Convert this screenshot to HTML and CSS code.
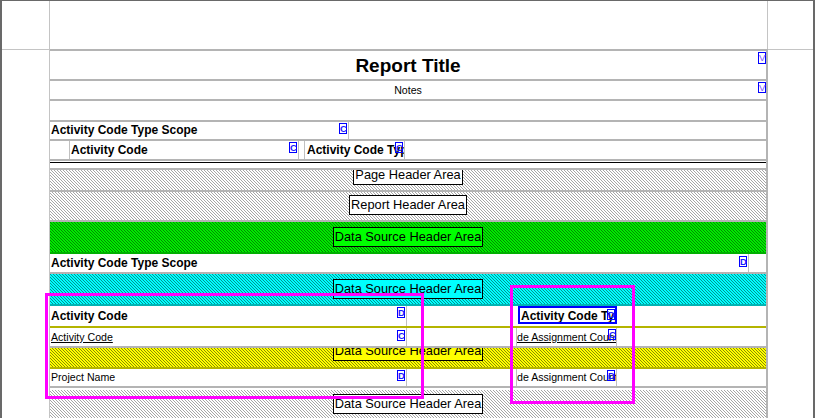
FILE: index.html
```html
<!DOCTYPE html>
<html>
<head>
<meta charset="utf-8">
<link rel="stylesheet" href="styles.css">
</head>
<body>
<div class="stage">
  <div class="frame">
    <div class="gutter"><div class="gutter-top"></div></div>
    <div class="page">
      <div class="page-top"></div>
      <div class="sheet">
        <div class="line"></div>
        <div class="row title-row"><span class="title">Report Title</span><span class="badge b-title">V</span></div>
        <div class="line"></div>
        <div class="row notes-row"><span class="notes">Notes</span><span class="badge b-notes">V</span></div>
        <div class="line"></div>
        <div class="row empty-row"></div>
        <div class="line"></div>
        <div class="row scope-row">
          <div class="cell bold cell-scope">Activity Code Type Scope<span class="badge b-r1">C</span></div>
        </div>
        <div class="line"></div>
        <div class="row ac-row">
          <div class="cell indent"></div>
          <div class="cell bold cell-ac">Activity Code<span class="badge b-r1">C</span></div>
          <div class="cell gap"></div>
          <div class="cell bold cell-act">Activity Code Type<span class="badge b-r1">C</span></div>
        </div>
        <div class="line"></div>
        <div class="sep"></div>
        <div class="line"></div>
        <div class="band hatch-gray h20"><div class="area area-page">Page Header Area</div></div>
        <div class="line"></div>
        <div class="band hatch-gray h28"><div class="area area-report">Report Header Area</div></div>
        <div class="line"></div>
        <div class="band hatch-green h30"><div class="area area-ds green">Data Source Header Area</div></div>
        <div class="line line-green"></div>
        <div class="row r18">
          <div class="cell bold cell-wide">Activity Code Type Scope<span class="badge b-r1 b-t2">D</span></div>
        </div>
        <div class="line"></div>
        <div class="band hatch-cyan h30"><div class="area area-ds cyan">Data Source Header Area</div></div>
        <div class="line line-cyan"></div>
        <div class="row r20">
          <div class="cell bold cell-left">Activity Code<span class="badge b-r1">D</span></div>
          <div class="spacer sp-sel"></div>
          <div class="cell bold cell-sel">Activity Code Type<span class="badge b-r0">D</span></div>
        </div>
        <div class="line line-olive"></div>
        <div class="row r18">
          <div class="cell cell-left"><span class="u">Activity Code</span><span class="badge b-r1 b-t2">C</span></div>
          <div class="spacer sp-r"></div>
          <div class="cell cell-right"><span class="u">de Assignment Count</span><span class="badge b-r0">C</span></div>
        </div>
        <div class="line"></div>
        <div class="band hatch-yellow h19"><div class="area area-yellow yellow">Data Source Header Area</div></div>
        <div class="line line-olive"></div>
        <div class="row r17">
          <div class="cell cell-left">Project Name<span class="badge b-r1">D</span></div>
          <div class="spacer sp-r"></div>
          <div class="cell cell-right">de Assignment Count<span class="badge b-r1">D</span></div>
        </div>
        <div class="line"></div>
        <div class="white2"></div>
        <div class="band hatch-gray fill"><div class="area area-last">Data Source Header Area</div></div>
      </div>
    </div>
    <div class="gutter-r"><div class="gutter-top"></div></div>
  </div>
  <div class="mark mark-a"></div>
  <div class="mark mark-b"></div>
</div>
</body>
</html>
```

FILE: styles.css
```css
* { box-sizing: border-box; }

body {
  margin: 0;
  background: #fff;
  font-family: "Liberation Sans", Arial, sans-serif;
  color: #000;
}

.stage {
  position: relative;
  width: 816px;
  height: 418px;
  overflow: hidden;
  background: #fff;
}

.frame {
  display: flex;
  width: 815px;
  height: 418px;
  border-top: 1px solid #696969;
  border-left: 2px solid #696969;
  border-right: 2px solid #696969;
}

.gutter {
  width: 48px;
  flex: none;
  border-right: 1px solid #c4c4c4;
}

.gutter-top {
  height: 49px;
  border-bottom: 1px solid #c4c4c4;
}

.gutter-r {
  width: 45px;
  flex: none;
}

.page {
  width: 718px;
  flex: none;
  display: flex;
  flex-direction: column;
}

.page-top {
  height: 48px;
  flex: none;
  border-right: 1px solid #c4c4c4;
}

.sheet {
  flex: 1;
  display: flex;
  flex-direction: column;
  border-right: 2px solid #b4b4b4;
}

.line {
  height: 2px;
  flex: none;
  background: #b4b4b4;
}
.line-green { background: #00b000; }
.line-cyan { background: #00b4b4; }
.line-olive { background: #b4b400; }

.sep {
  flex: none;
  margin-top: 1px;
  border-top: 1px solid #000;
  height: 6px;
}

.white2 { height: 2px; flex: none; }

.row {
  position: relative;
  display: flex;
  flex: none;
  background: #fff;
  font-size: 10.6px;
}

.title-row { height: 28px; justify-content: center; }
.title {
  font-weight: bold;
  font-size: 19px;
  line-height: 28px;
  padding-top: 1px;
}
.notes-row { height: 18px; justify-content: center; }
.notes { font-size: 10.6px; line-height: 18px; }
.empty-row { height: 19px; }
.scope-row { height: 17px; line-height: 17px; }
.ac-row { height: 18px; line-height: 18px; }
.r17 { height: 17px; line-height: 17px; }
.r18 { height: 18px; line-height: 18px; }
.r20 { height: 20px; line-height: 20px; }

.cell {
  position: relative;
  height: 100%;
  flex: none;
  overflow: hidden;
  white-space: nowrap;
  padding-left: 1px;
  border-right: 1px solid #c0c0c0;
}
.bold { font-weight: bold; font-size: 12px; }

.cell-scope { width: 299px; }
.indent { width: 20px; }
.cell-ac { width: 229px; }
.gap { width: 6px; }
.cell-act { width: 100px; padding-left: 2px; }
.cell-wide { width: 699px; }
.cell-left { width: 357px; }
.sp-sel { width: 111px; flex: none; }
.sp-r { width: 109px; flex: none; }
.cell-sel {
  width: 99px;
  height: 18px;
  border: 2px solid #0000ff;
  line-height: 16px;
  padding-left: 1px;
}
.cell-right {
  width: 101px;
  border-left: 1px solid #c0c0c0;
  padding-left: 0;
}

.u { text-decoration: underline; }

.badge {
  position: absolute;
  top: 1px;
  width: 8px;
  height: 11px;
  border: 1px solid #0000ff;
  color: #1a1aff;
  font-family: "Liberation Sans", Arial, sans-serif;
  font-weight: bold;
  font-size: 9.5px;
  line-height: 9px;
  text-align: center;
  letter-spacing: -0.5px;
}
.b-title { right: 0; top: 1px; height: 12px; line-height: 10px; color: #7a50ff; font-weight: normal; }
.b-notes { right: 0; top: 1px; color: #7a50ff; font-weight: normal; }
.b-r1 { right: 1px; }
.b-r0 { right: 0; }
.b-t2 { top: 2px; }

.band {
  position: relative;
  flex: none;
  overflow: hidden;
  display: flex;
  justify-content: center;
  align-items: flex-start;
}
.h19 { height: 19px; }
.h20 { height: 20px; }
.h28 { height: 28px; }
.h30 { height: 30px; }
.fill { flex: 1; }

.hatch-gray {
  background: repeating-linear-gradient(45deg, #a6a6a6 0 0.6px, #ffffff 0.6px 2.121px);
}
.hatch-green {
  background: repeating-linear-gradient(45deg, #008c00 0 0.7px, #00ea00 0.7px 2.121px);
}
.hatch-cyan {
  background: repeating-linear-gradient(45deg, #009494 0 0.6px, #00ffff 0.6px 2.121px);
}
.hatch-yellow {
  background: repeating-linear-gradient(45deg, #8c8c00 0 0.6px, #ffff00 0.6px 2.121px);
}

.area {
  flex: none;
  height: 20px;
  border: 1px solid #000;
  padding: 0 1px;
  font-size: 12.8px;
  line-height: 18px;
  white-space: nowrap;
  background: #fff;
}
.area-page { margin-top: -5px; }
.area-report { margin-top: 3px; }
.area-ds { margin-top: 5px; }
.area-yellow { margin-top: -7px; }
.area-last { margin-top: 4px; }
.green { background: #00ff00; }
.cyan { background: #00ffff; }
.yellow { background: #ffff00; }

.mark {
  position: absolute;
  border: 3px solid #ff00ff;
}
.mark-a { left: 45px; top: 293px; width: 379px; height: 106px; }
.mark-b { left: 510px; top: 285px; width: 125px; height: 119px; }
```
